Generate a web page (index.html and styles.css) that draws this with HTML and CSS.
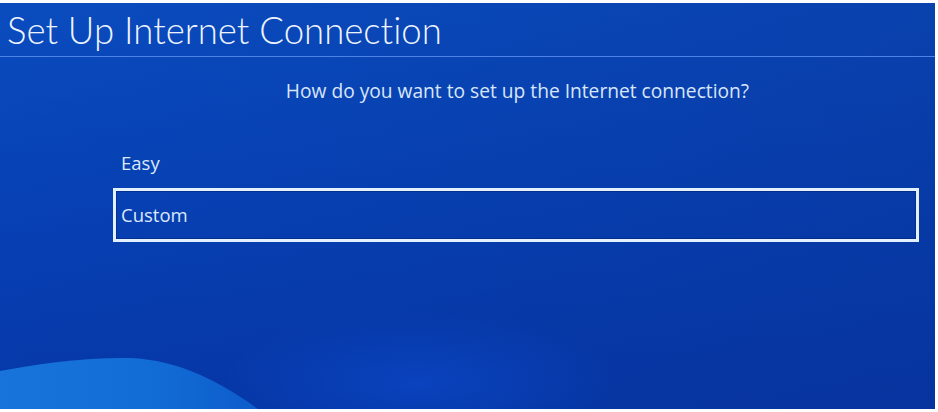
FILE: index.html
```html
<!DOCTYPE html>
<html>
<head>
<meta charset="utf-8">
<link rel="stylesheet" href="styles.css">
</head>
<body>
<div class="screen">
  <svg class="wave" viewBox="0 0 935 406" preserveAspectRatio="none" aria-hidden="true">
    <defs>
      <linearGradient id="wg" x1="0" y1="0" x2="1" y2="0">
        <stop offset="0" stop-color="#1874da"/>
        <stop offset="0.6" stop-color="#126cd6"/>
        <stop offset="1" stop-color="#0d5ccb"/>
      </linearGradient>
      <radialGradient id="glow" cx="0.5" cy="0.5" r="0.5">
        <stop offset="0" stop-color="#0b48c8" stop-opacity="0.7"/>
        <stop offset="1" stop-color="#0b48c8" stop-opacity="0"/>
      </radialGradient>
    </defs>
    <ellipse cx="420" cy="380" rx="200" ry="70" fill="url(#glow)"/>
    <path d="M0,368 C40,360 90,354 130,355 C180,357 222,380 258,406 L0,406 Z" fill="url(#wg)"/>
  </svg>
  <header class="titlebar">
    <h1 class="title">Set Up Internet Connection</h1>
  </header>
  <main class="content">
    <p class="question">How do you want to set up the Internet connection?</p>
    <ul class="options">
      <li class="option">Easy</li>
      <li class="option selected">Custom</li>
    </ul>
  </main>
</div>
</body>
</html>
```

FILE: styles.css
```css
html, body {
  margin: 0;
  padding: 0;
  background: #ffffff;
}
body {
  width: 938px;
  height: 412px;
  overflow: hidden;
  padding-top: 3px;
  box-sizing: border-box;
  font-family: "Open Sans", "Lato", sans-serif;
  font-variant-ligatures: none;
}
.screen {
  position: relative;
  width: 935px;
  height: 406px;
  overflow: hidden;
  color: #e4eefc;
  background:
    linear-gradient(90deg, rgba(11,80,200,0.0) 0%, rgba(8,45,140,0.35) 100%),
    linear-gradient(180deg, #0a4cbf 0%, #0742b6 45%, #0637a8 100%);
}
.wave {
  position: absolute;
  left: 0;
  top: 0;
  width: 935px;
  height: 406px;
}
.titlebar {
  position: relative;
  height: 54px;
  border-bottom: 1px solid #4d83e6;
  box-sizing: border-box;
  padding-left: 7px;
}
.title {
  margin: 0;
  font-family: "Lato", "Open Sans", sans-serif;
  font-weight: 300;
  font-size: 36.6px;
  line-height: 54px;
  color: #eef4ff;
  white-space: nowrap;
}
.content {
  position: relative;
  display: flex;
  flex-direction: column;
}
.question {
  margin: 22px 0 0 0;
  padding-left: 100px;
  text-align: center;
  font-size: 19.2px;
  font-weight: 400;
  line-height: 24px;
  color: #d8e6fb;
  white-space: nowrap;
}
.options {
  list-style: none;
  margin: 35px 0 0 113px;
  padding: 0;
  width: 806px;
  display: flex;
  flex-direction: column;
}
.option {
  height: 50px;
  box-sizing: border-box;
  padding-left: 5px;
  font-size: 18.5px;
  line-height: 44px;
  color: #dce9fc;
  border: 3px solid transparent;
}
.selected {
  height: 54px;
  line-height: 48px;
  border-color: #e3f1ff;
  box-shadow: inset 0 0 0 1px rgba(0,20,80,0.35);
}
```
